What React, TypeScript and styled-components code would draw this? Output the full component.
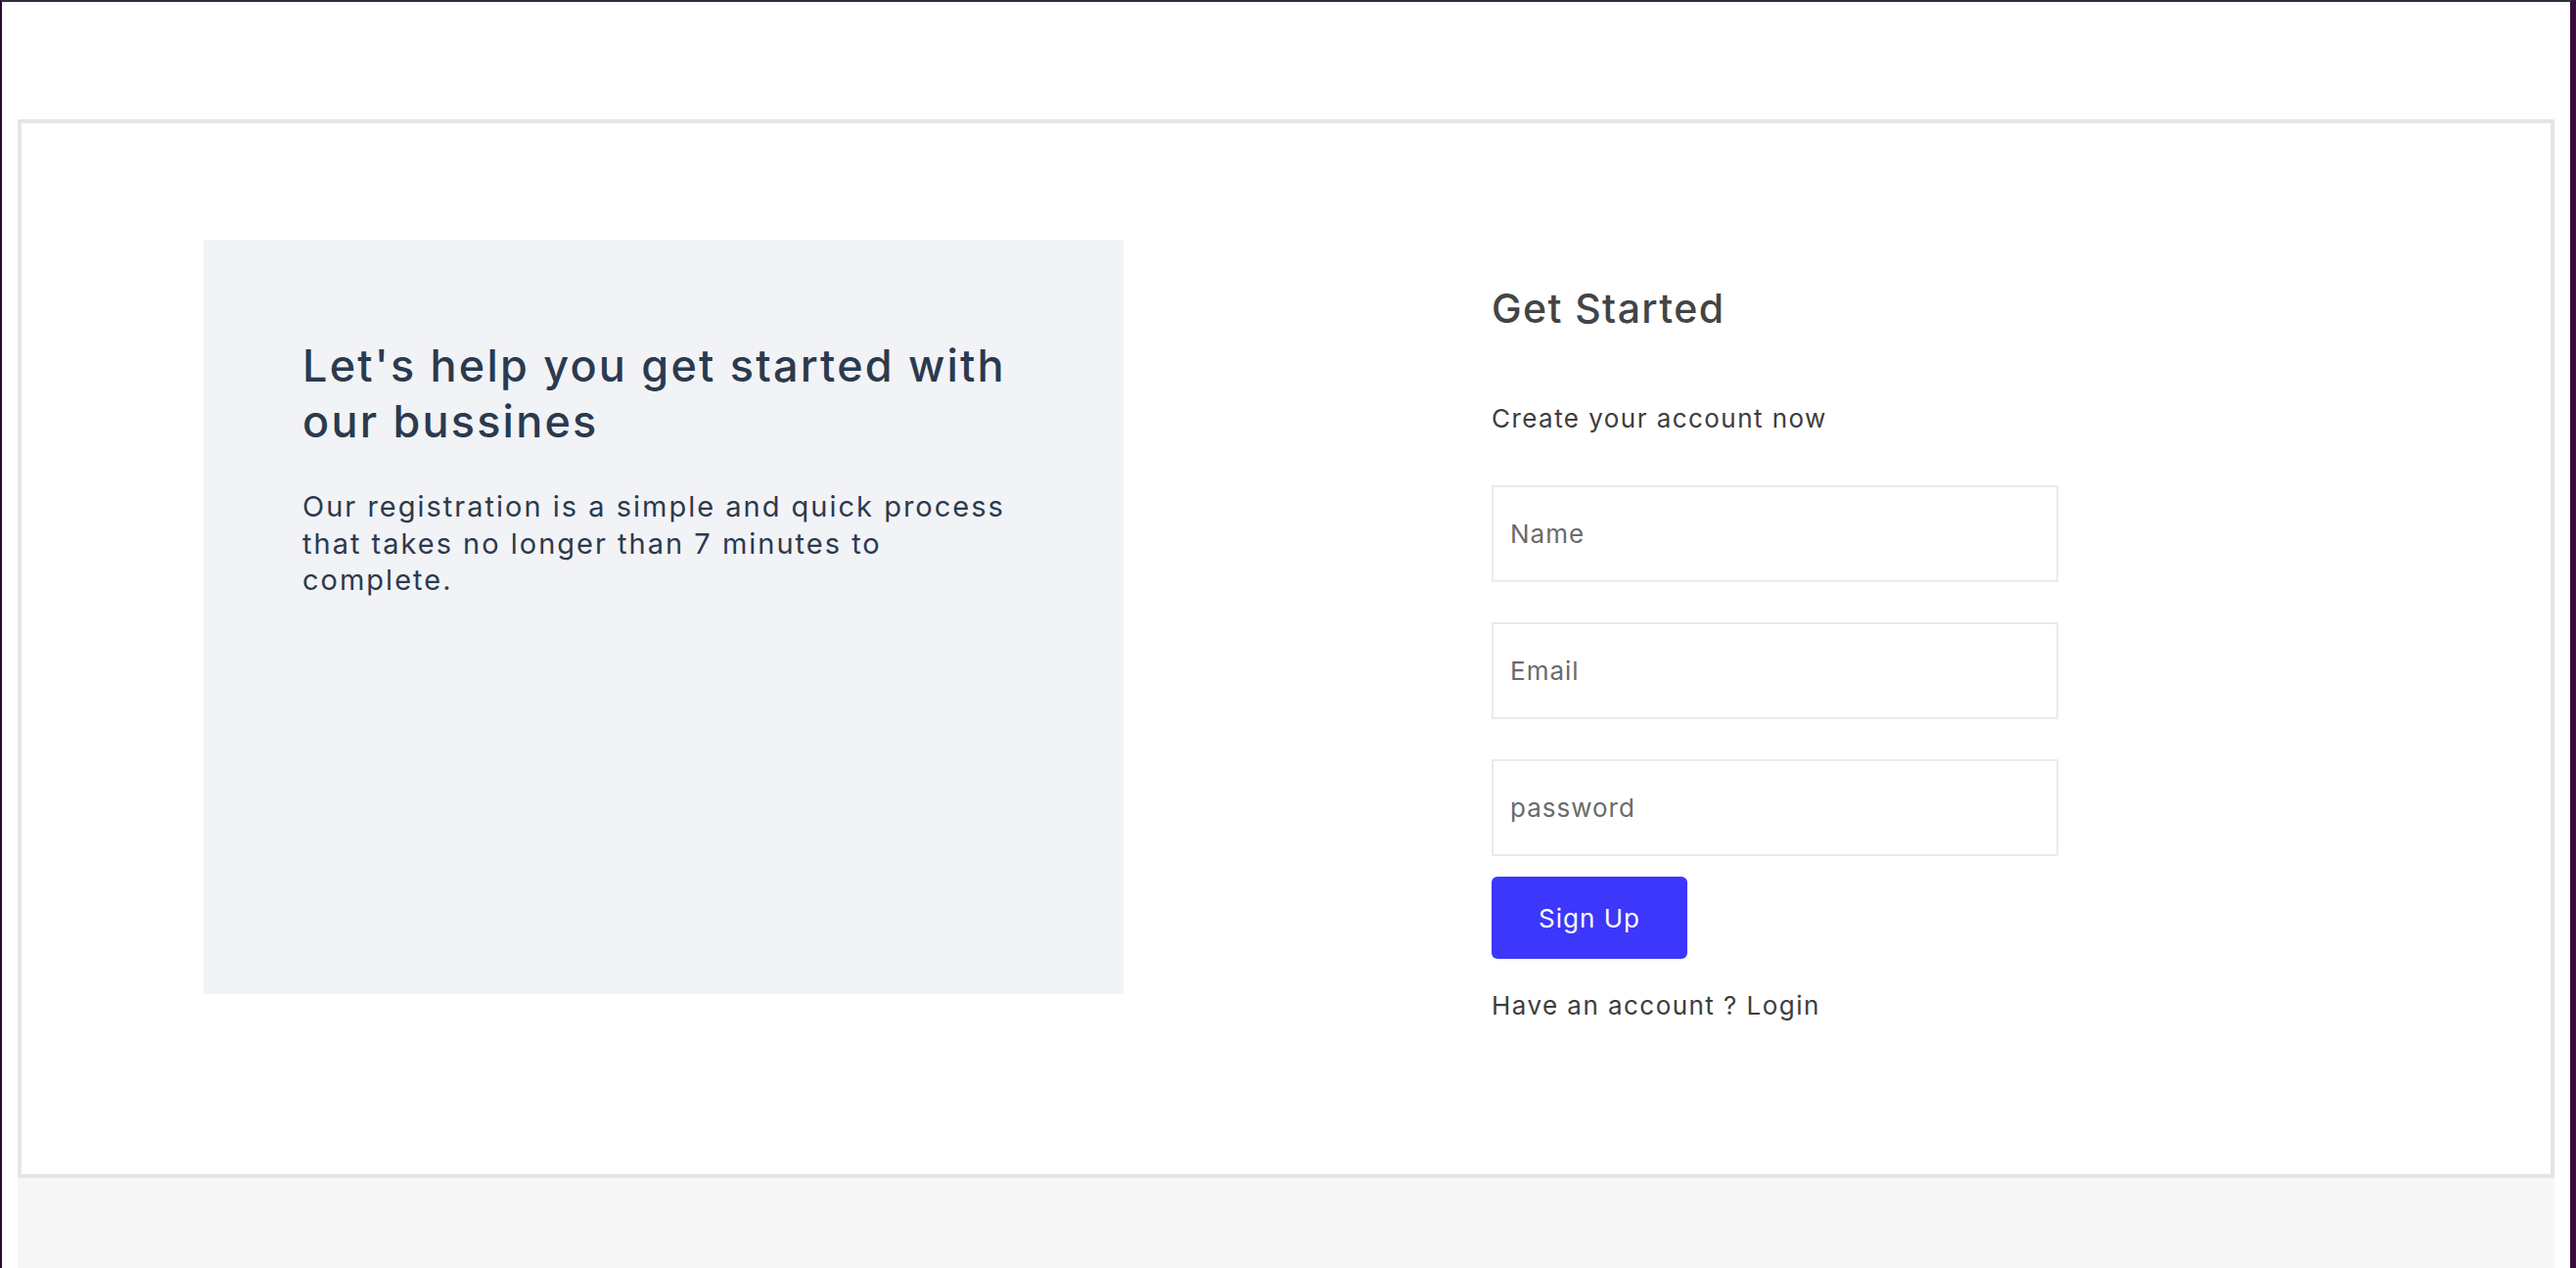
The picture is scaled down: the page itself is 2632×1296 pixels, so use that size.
import React from "react";
import styled, { createGlobalStyle } from "styled-components";

const GlobalStyle = createGlobalStyle`
  html, body {
    margin: 0;
    padding: 0;
    overflow: hidden;
  }
  body {
    font-family: "Inter", "Noto Sans", sans-serif;
    background: #ffffff;
  }
  * {
    box-sizing: border-box;
  }
`;

const Frame = styled.div`
  height: 100vh;
  display: flex;
  flex-direction: column;
  border-top: 2px solid #2f2f3f;
  border-left: 2px solid #2a0b2c;
  border-right: 6px solid #3a0d3c;
  background: #ffffff;
  padding: 120px 16px 0;
`;

const Card = styled.section`
  flex-shrink: 0;
  border: 4px solid #e6e4e4;
  background: #ffffff;
  height: 1082px;
  padding: 119px 0 0 186px;
  display: flex;
  align-items: flex-start;
`;

const Footer = styled.div`
  flex: 1;
  background: #f7f7f7;
`;

const InfoPanel = styled.div`
  width: 940px;
  height: 771px;
  background: #f2f3f6;
  padding: 100px 98px 0 101px;
  color: #2b3a4e;
`;

const InfoTitle = styled.h1`
  margin: 0;
  font-size: 45px;
  line-height: 57px;
  font-weight: 500;
  letter-spacing: 2.2px;
`;

const InfoText = styled.p`
  margin: 40px 0 0;
  font-size: 29px;
  line-height: 37.5px;
  font-weight: 400;
  letter-spacing: 2px;
`;

const FormColumn = styled.form`
  margin-left: 376px;
  width: 579px;
  display: flex;
  flex-direction: column;
  color: #444444;
`;

const FormTitle = styled.h2`
  margin: 45px 0 0;
  font-size: 41px;
  line-height: 50px;
  font-weight: 500;
  color: #444444;
  letter-spacing: 1.4px;
`;

const Caption = styled.p<{ $gap: number }>`
  margin: ${(p) => p.$gap}px 0 0;
  font-size: 26px;
  line-height: 32px;
  color: #3d3d3d;
  letter-spacing: 1.45px;
`;

const Field = styled.input<{ $gap: number }>`
  margin-top: ${(p) => p.$gap}px;
  height: 99px;
  width: 100%;
  border: 2px solid #ebebeb;
  padding: 0 17px;
  font-family: inherit;
  font-size: 26px;
  color: #333333;
  letter-spacing: 1px;
  outline: none;

  &::placeholder {
    color: #6a6a6a;
  }
`;

const SubmitButton = styled.button`
  margin-top: 21px;
  width: 200px;
  height: 84px;
  border: none;
  border-radius: 6px;
  background: #3c37fb;
  color: #ffffff;
  font-family: inherit;
  font-size: 26px;
  letter-spacing: 1px;
  cursor: pointer;
`;

export default function App() {
  return (
    <>
      <GlobalStyle />
      <Frame>
        <Card>
          <InfoPanel>
            <InfoTitle>Let's help you get started with our bussines</InfoTitle>
            <InfoText>
              Our registration is a simple and quick process that takes no longer than 7 minutes to
              complete.
            </InfoText>
          </InfoPanel>
          <FormColumn onSubmit={(e) => e.preventDefault()}>
            <FormTitle>Get Started</FormTitle>
            <Caption $gap={72}>Create your account now</Caption>
            <Field $gap={52} type="text" placeholder="Name" />
            <Field $gap={41} type="email" placeholder="Email" />
            <Field $gap={41} type="password" placeholder="password" />
            <SubmitButton type="submit">Sign Up</SubmitButton>
            <Caption $gap={32}>Have an account ? Login</Caption>
          </FormColumn>
        </Card>
        <Footer />
      </Frame>
    </>
  );
}
